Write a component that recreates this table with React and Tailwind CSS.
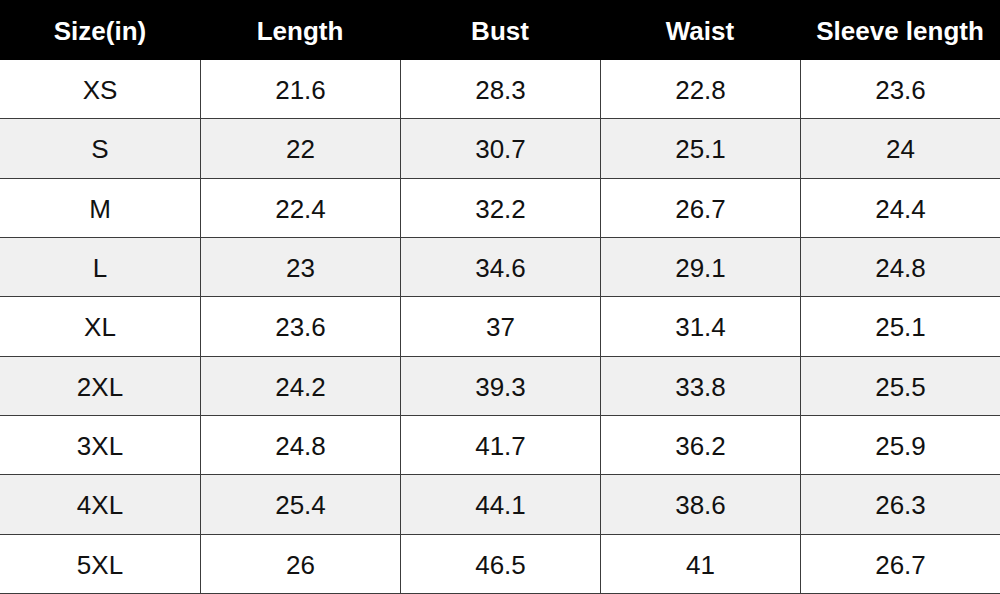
import React from 'react';

const headers = ['Size(in)', 'Length', 'Bust', 'Waist', 'Sleeve length'];

const rows = [
  ['XS', '21.6', '28.3', '22.8', '23.6'],
  ['S', '22', '30.7', '25.1', '24'],
  ['M', '22.4', '32.2', '26.7', '24.4'],
  ['L', '23', '34.6', '29.1', '24.8'],
  ['XL', '23.6', '37', '31.4', '25.1'],
  ['2XL', '24.2', '39.3', '33.8', '25.5'],
  ['3XL', '24.8', '41.7', '36.2', '25.9'],
  ['4XL', '25.4', '44.1', '38.6', '26.3'],
  ['5XL', '26', '46.5', '41', '26.7'],
];

const App = () => {
  return (
    <div className="w-[1000px] h-[594px] flex flex-col bg-white font-['Liberation_Sans',Arial,sans-serif] overflow-hidden">
      {/* header */}
      <div className="grid grid-cols-5 h-[60px] shrink-0 bg-black">
        {headers.map((h) => (
          <div key={h} className="flex items-center justify-center text-white font-bold text-[26px] pt-[3px]">
            {h}
          </div>
        ))}
      </div>

      <div className="flex-1 flex flex-col">
        {rows.map((r, i) => (
          <div
            key={r[0]}
            className={`flex-1 grid grid-cols-5 border-b border-[#3c3c3c] ${i % 2 === 1 ? 'bg-[#f0f0f0]' : 'bg-white'}`}
          >
            {r.map((c, j) => (
              <div
                key={j}
                className={`flex items-center justify-center text-[26px] text-[#111] pt-[3px] ${j > 0 ? 'border-l border-[#3c3c3c]' : ''}`}
              >
                {c}
              </div>
            ))}
          </div>
        ))}
      </div>
    </div>
  );
};

export default App;
